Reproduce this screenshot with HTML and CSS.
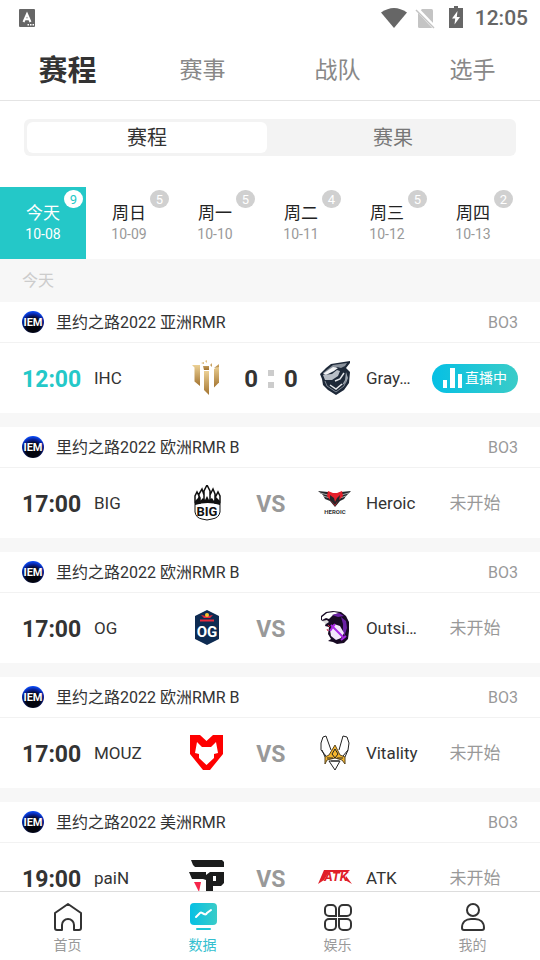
FILE: index.html
```
<!DOCTYPE html>
<html lang="zh-CN">
<head>
  <meta charset="UTF-8" />
  <meta name="viewport" content="width=device-width, initial-scale=1.0" />
  <title>赛程</title>
  <link rel="stylesheet" href="styles.css">
</head>
<body>
  <!-- shared event logo and gradients -->
  <svg class="defs" width="0" height="0" aria-hidden="true">
    <defs>
      <radialGradient id="iem-bg" cx="50%" cy="65%" r="62%">
        <stop offset="0.5" stop-color="#02030c" />
        <stop offset="0.8" stop-color="#08229a" />
        <stop offset="1" stop-color="#0a48f0" />
      </radialGradient>
      <linearGradient id="gold" x1="0" y1="0" x2="0" y2="1">
        <stop offset="0" stop-color="#ecd094" />
        <stop offset="1" stop-color="#a37430" />
      </linearGradient>
      <linearGradient id="teal" x1="0" y1="0" x2="1" y2="0">
        <stop offset="0" stop-color="#06c0e4" />
        <stop offset="1" stop-color="#3accc8" />
      </linearGradient>
      <symbol id="iem" viewBox="0 0 22 22">
        <circle cx="11" cy="11" r="11" fill="url(#iem-bg)" />
        <text x="11" y="15" class="iem-text">IEM</text>
      </symbol>
    </defs>
  </svg>

  <header class="status-bar">
    <svg class="ime" width="16" height="18" viewBox="0 0 16 18">
      <rect width="16" height="18" rx="1" fill="#666" />
      <path d="M4.500 13L8 5l3.500 8M5.700 10.300h4.600" fill="none" stroke="#fff" stroke-width="2" />
      <path d="M8.500 15h1.500v1.500H8.500zM11 15h1.500v1.500H11zM13.500 15H15v1.500h-1.500z" fill="#fff" />
    </svg>
    <div class="status-icons">
      <svg width="26" height="21" viewBox="0 0 26 21"><path d="M0 4.500Q13-4.500 26 4.500L13 20z" fill="#666" /></svg>
      <svg width="20" height="21" viewBox="0 0 20 21">
        <path d="M7 1h9.500a1.500 1.500 0 0 1 1.500 1.500V20H4.500A1.500 1.500 0 0 1 3 18.500V5z" fill="#c4c4c4" />
        <path d="M1 0l19 20" stroke="#fff" stroke-width="4" />
        <path d="M1 2l18 18" stroke="#c4c4c4" stroke-width="1.500" />
      </svg>
      <svg class="battery" width="14" height="22" viewBox="0 0 14 22">
        <path d="M5 0h4v2h5v20H0V2h5z" fill="#666" />
        <path d="M8.500 5L3 12.500h3.200L5.500 18.500 11 11H7.800z" fill="#fff" />
      </svg>
      <span class="clock">12:05</span>
    </div>
  </header>

  <nav class="tabs">
    <a href="#" class="tab active">赛程</a>
    <a href="#" class="tab">赛事</a>
    <a href="#" class="tab">战队</a>
    <a href="#" class="tab">选手</a>
  </nav>

  <div class="segment">
    <button type="button" class="segment-btn active">赛程</button>
    <button type="button" class="segment-btn">赛果</button>
  </div>

  <div class="dates">
    <button type="button" class="date active"><span class="day">今天</span><span class="num">10-08</span><span class="badge">9</span></button>
    <button type="button" class="date"><span class="day">周日</span><span class="num">10-09</span><span class="badge">5</span></button>
    <button type="button" class="date"><span class="day">周一</span><span class="num">10-10</span><span class="badge">5</span></button>
    <button type="button" class="date"><span class="day">周二</span><span class="num">10-11</span><span class="badge">4</span></button>
    <button type="button" class="date"><span class="day">周三</span><span class="num">10-12</span><span class="badge">5</span></button>
    <button type="button" class="date"><span class="day">周四</span><span class="num">10-13</span><span class="badge">2</span></button>
  </div>

  <main class="matches">
    <h2 class="group-title">今天</h2>

    <section class="match">
      <div class="match-head">
        <svg class="event-logo"><use href="#iem" /></svg>
        <span class="event">里约之路2022 亚洲RMR</span>
        <span class="format">BO3</span>
      </div>
      <div class="match-body">
        <span class="time live">12:00</span>
        <span class="team">IHC</span>
        <svg class="logo" viewBox="0 0 36 36">
          <g fill="url(#gold)">
            <path d="M3 5h8v21l-5.500-4.500V7.500z" />
            <path d="M15 11h5v24l-5-5z" />
            <path d="M30 6l-5 3v18.500l5-5z" />
            <path d="M14 6h6v4h-5zM12 3l3-1v2zM16 1l2-1v3zM21 5l2-2v4zM25 8l5-4v3z" />
          </g>
        </svg>
        <span class="score"><b>0</b><i class="dots"></i><b>0</b></span>
        <svg class="logo" viewBox="0 0 36 36">
          <path d="M33 1L14 4 9 8l-6 6 2 5 1 6 5 5 8 5 8-5 5-7 1-11-4-4 4-5z" fill="#1d2838" />
          <path d="M30 3L16 5l-5 4-5 4 2 1 8-4 4-3 4 1 4-2z" fill="#8a929c" />
          <path d="M10 11l6-4 5 1-4 3-8 4-3-1z" fill="#f4f5f7" />
          <path d="M6 15l9-1 5-4 3 1-2 5-6 4H8z" fill="#b9bfc7" />
          <path d="M29 12l2 6-2 5-4 2 3-5z" fill="#9aa2ac" />
          <path d="M8 21l2 5 9 6 8-6 2-5" fill="none" stroke="#7e8792" stroke-width="1" />
          <path d="M13 25l6 4 6-5" fill="none" stroke="#e6e8eb" stroke-width="1.500" />
          <path d="M27 13l-4 6-5 2" fill="none" stroke="#e6e8eb" stroke-width="1.500" />
        </svg>
        <span class="team away">Gray…</span>
        <button type="button" class="live-btn">
          <svg width="20" height="20" viewBox="0 0 20 20"><path d="M0 12h4v8H0zM7 0h5v20H7zM15 6h4v14h-4z" fill="#fff" /></svg>
          <span class="live-label">直播中</span>
        </button>
      </div>
    </section>

    <section class="match">
      <div class="match-head">
        <svg class="event-logo"><use href="#iem" /></svg>
        <span class="event">里约之路2022 欧洲RMR B</span>
        <span class="format">BO3</span>
      </div>
      <div class="match-body">
        <span class="time">17:00</span>
        <span class="team">BIG</span>
        <svg class="logo" viewBox="0 0 36 36">
          <!-- paw -->
          <path d="M6 19q12-5 25 0v8q-1 6-8 7l-5 1-5-1q-6-1-7-7z" fill="#fff" stroke="#111" stroke-width="1" />
          <g fill="#fff" stroke="#111" stroke-width="1.500">
            <path d="M6 18v-7l2-4 3 6v5zM10 17V9l3-5 2 6v6zM15 16V6l3-6 3 6v10zM21 16v-6l3-6 2 5v8zM26 18v-5l3-6 2 4v7z" />
          </g>
          <path d="M6 20v-4l4-4 1 4 3-3 2 2 2-4 2 4 3-2 2 3 2-4 4 4v4q-12-4-25 0z" fill="#111" />
          <text x="18" y="31" class="big-text">BIG</text>
        </svg>
        <span class="vs">VS</span>
        <svg class="logo" viewBox="0 0 36 36">
          <path d="M1 6l10 1 6 3 7-3 10-1-5 5-2 3-4 2-5 6-5-6-5-2-2-4z" fill="#25262a" />
          <path d="M3 8l8 2M6 11l7 2M32 8l-8 2M29 11l-6 2" stroke="#aaa" stroke-width="1" />
          <path d="M11 6l5 2h4l5-2 1 5-5 5-3 5-4-5-4-5z" fill="#e5202b" />
          <path d="M13 10l4 3 1 4 2-4 3-3-1 6-2 1-2 3-3-3-2-2z" fill="#25262a" />
          <text x="18" y="29" class="heroic-text">HEROIC</text>
        </svg>
        <span class="team away">Heroic</span>
        <span class="state">未开始</span>
      </div>
    </section>

    <section class="match">
      <div class="match-head">
        <svg class="event-logo"><use href="#iem" /></svg>
        <span class="event">里约之路2022 欧洲RMR B</span>
        <span class="format">BO3</span>
      </div>
      <div class="match-body">
        <span class="time">17:00</span>
        <span class="team">OG</span>
        <svg class="logo" viewBox="0 0 36 36">
          <path d="M18 0l12 6v23l-12 6-12-6V6z" fill="#0e2b52" />
          <path d="M12 5l5 1 1-3 1 3 5-1-3 3h-6z" fill="#e52b3c" />
          <circle cx="18" cy="5" r="2" fill="#f6c431" />
          <path d="M11 10.500h14" stroke="#e52b3c" stroke-width="2" />
          <text x="18" y="27" class="og-text">OG</text>
        </svg>
        <span class="vs">VS</span>
        <svg class="logo" viewBox="0 0 36 36">
          <path d="M4 6l5-4 7-1 8 1 5 4 3 6v9l-1 8-4 4-7 1-4-2-5-1 3-2-3-5 1-7-4-1 1-3-5-3z" fill="#180a24" />
          <path d="M5 7l5-4 7-1 5 1-6 2-4 4-3-1-4 2z" fill="#fff" />
          <path d="M15 5l7-2 5 3-6 1zM24 7l5 4 1 7-3 9-1-6v-7z" fill="#6b21a5" />
          <path d="M5 11l5-1 2 2-3 2z" fill="#ddd" />
          <path d="M13 20l4-6 6 2 4 7-3 5-5 2-5-4z" fill="#f3e6fb" />
          <path d="M14 15l12 12M18 14l-5 7M24 30l5-4" fill="none" stroke="#a927e6" stroke-width="2" />
          <path d="M11 15l2 2M10 19l1 2" stroke="#d61f3c" stroke-width="1" />
        </svg>
        <span class="team away">Outsi…</span>
        <span class="state">未开始</span>
      </div>
    </section>

    <section class="match">
      <div class="match-head">
        <svg class="event-logo"><use href="#iem" /></svg>
        <span class="event">里约之路2022 欧洲RMR B</span>
        <span class="format">BO3</span>
      </div>
      <div class="match-body">
        <span class="time">17:00</span>
        <span class="team">MOUZ</span>
        <svg class="logo" viewBox="0 0 36 36">
          <path d="M1 0h10l6.500 6L24 0h10v19L21 35h-7L1 19z" fill="#fe0000" />
          <path d="M8 7l5 5h9l5-5 2 11-4 1v4l-7.500 7L10 23v-4l-4-1z" fill="#fff" />
        </svg>
        <span class="vs">VS</span>
        <svg class="logo" viewBox="0 0 36 36">
          <g fill="#fff" stroke="#222" stroke-width="1">
            <path d="M14 15L9 1 6 2 4 8v7l5 6M22 15l4-14 4 1 2 6-1 7-5 6" />
            <path d="M5 15l3 7M31 15l-3 7M12 26l6 9 5-9z" />
          </g>
          <path d="M18 10l5 10 5 2v7l-3-4-7-2-8 2-2 4v-7l4-2z" fill="#f5b62d" stroke="#5b4720" stroke-width="1" />
          <path d="M18 14l3 5-3 4-3-4zM10 23h6M20 23h6M14 26h8" fill="none" stroke="#222" stroke-width="1" />
        </svg>
        <span class="team away">Vitality</span>
        <span class="state">未开始</span>
      </div>
    </section>

    <section class="match">
      <div class="match-head">
        <svg class="event-logo"><use href="#iem" /></svg>
        <span class="event">里约之路2022 美洲RMR</span>
        <span class="format">BO3</span>
      </div>
      <div class="match-body">
        <span class="time">19:00</span>
        <span class="team">paiN</span>
        <svg class="logo" viewBox="0 0 36 36">
          <path d="M2 0h31l2 2v5H6L4 5zM0 12h17v3l4-3h14v11l-3 3h-8v9h-7V20l-3-1H3z" fill="#1b1c1c" />
          <path d="M24 16h3v5h-3z" fill="#fff" />
          <path d="M5 22h7l-2 10z" fill="#f5254a" />
        </svg>
        <span class="vs">VS</span>
        <svg class="logo" viewBox="0 0 36 36">
          <path d="M7 10h26l-2 2H12l-5 8-6 4zM29 16l6 8-7-4z" fill="#e01f29" />
          <text x="19" y="21" class="atk-text">ATK</text>
        </svg>
        <span class="team away">ATK</span>
        <span class="state">未开始</span>
      </div>
    </section>
  </main>

  <nav class="bottom-nav">
    <a href="#" class="nav-item">
      <svg width="30" height="30" viewBox="0 0 30 30" fill="none" stroke="#333" stroke-width="2" stroke-linejoin="round">
        <path d="M2 11L15 2l13 9v15a2 2 0 0 1-2 2h-5v-5a6 6 0 0 0-12 0v5H4a2 2 0 0 1-2-2z" />
      </svg>首页
    </a>
    <a href="#" class="nav-item active">
      <svg width="30" height="30" viewBox="0 0 30 30">
        <rect x="2" y="1" width="27" height="22" rx="4" fill="url(#teal)" />
        <rect x="8" y="26" width="15" height="2" rx="1" fill="#20c6d6" />
        <path d="M8 15l4-4q1-1 2 0l2 1q2 1 3-1l4-3" fill="none" stroke="#fff" stroke-width="2" stroke-linecap="round" />
      </svg>数据
    </a>
    <a href="#" class="nav-item">
      <svg width="30" height="30" viewBox="0 0 30 30" fill="none" stroke="#333" stroke-width="2">
        <path d="M6 3h3a4 4 0 0 1 4 4v7H6a4 4 0 0 1-4-4V7a4 4 0 0 1 4-4zM16 14V7a4 4 0 0 1 4-4h4a4 4 0 0 1 4 4v3a4 4 0 0 1-4 4zM6 17h7v7a4 4 0 0 1-4 4H6a4 4 0 0 1-4-4v-3a4 4 0 0 1 4-4zM16 17h8a4 4 0 0 1 4 4v3a4 4 0 0 1-4 4h-4a4 4 0 0 1-4-4z" />
      </svg>娱乐
    </a>
    <a href="#" class="nav-item">
      <svg width="30" height="30" viewBox="0 0 30 30" fill="none" stroke="#333" stroke-width="2">
        <circle cx="15" cy="8" r="6" />
        <path d="M4 26c0-6 4-9 9-9h4c5 0 9 3 9 9q0 2-2 2H6q-2 0-2-2z" />
      </svg>我的
    </a>
  </nav>
</body>
</html>
```
FILE: styles.css
```
* {
  box-sizing: border-box;
}
body {
  margin: 0;
  height: 100vh;
  display: flex;
  flex-direction: column;
  overflow: hidden;
  background: #fff;
  color: #333;
  font-family: Roboto, "Noto Sans CJK SC", sans-serif;
}
a {
  color: inherit;
  text-decoration: none;
}
button {
  border: 0;
  padding: 0;
  background: none;
  color: inherit;
  font-family: inherit;
  cursor: pointer;
}
svg {
  display: block;
  flex: none;
}
.defs {
  position: absolute;
}

/* status bar */
.status-bar {
  flex: none;
  display: flex;
  align-items: center;
  justify-content: space-between;
  height: 36px;
  padding: 0 12px 0 19px;
}
.status-icons {
  display: flex;
  align-items: center;
  gap: 8px;
}
.battery {
  margin: 0 4px 2px 6px;
}
.clock {
  color: #666;
  font-size: 21px;
  font-weight: 500;
  line-height: 38px;
}

/* top tabs */
.tabs {
  flex: none;
  display: flex;
  height: 65px;
  border-bottom: 1px solid #e4e4e4;
}
.tab {
  flex: 1;
  text-align: center;
  color: #888;
  font-size: 23px;
  line-height: 70px;
}
.tab.active {
  color: #333;
  font-size: 29px;
  font-weight: bold;
}

.segment {
  flex: none;
  display: grid;
  grid-template-columns: 1fr 1fr;
  margin: 18px 24px 31px;
  border-radius: 6px;
  background: #f3f3f3;
}
.segment-btn {
  height: 31px;
  margin: 3px;
  border-radius: 6px;
  color: #777;
  font-size: 20px;
  line-height: 30px;
}
.segment-btn.active {
  background: #fff;
  color: #333;
}

/* date strip */
.dates {
  flex: none;
  display: flex;
  overflow: hidden;
}
.date {
  position: relative;
  flex: none;
  display: flex;
  flex-direction: column;
  align-items: center;
  width: 86px;
  height: 72px;
  padding-top: 14px;
  color: #999;
}
.day {
  color: #222;
  font-size: 17px;
  line-height: 24px;
}
.num {
  font-size: 14px;
  line-height: 18px;
}
.badge {
  position: absolute;
  top: 3px;
  right: 3px;
  width: 19px;
  height: 18px;
  border-radius: 9px;
  background: #d0d0d0;
  color: #fff;
  font-size: 13px;
  line-height: 19px;
}
.date.active {
  background: #24c8c8;
  color: #fff;
}
.date.active .day {
  color: #fff;
}
.date.active .badge {
  background: #fff;
  color: #24c8c8;
}

/* match list */
.matches {
  flex: 1;
  min-height: 0;
  overflow: hidden;
  background: #f7f7f7;
}
.group-title {
  margin: 0;
  padding: 0 22px;
  color: #ccc;
  font-size: 16px;
  font-weight: normal;
  line-height: 43px;
}
.match {
  margin-bottom: 14px;
  background: #fff;
}
.match-head {
  display: flex;
  align-items: center;
  gap: 12px;
  height: 41px;
  padding: 0 22px;
  border-bottom: 1px solid #f2f2f2;
  font-size: 16px;
  line-height: 41px;
}
.event-logo {
  width: 22px;
  height: 22px;
}
.event {
  flex: 1;
}
.format {
  color: #999;
}
.match-body {
  display: grid;
  grid-template-columns: 72px 6fr 36px 92px 36px 5fr 86px;
  align-items: center;
  height: 70px;
  padding: 0 22px;
  line-height: 24px;
}
.time,
.vs {
  padding-top: 4px;
  font-size: 23px;
  font-weight: bold;
  line-height: 30px;
}
.time.live {
  color: #24c8c8;
}
.team {
  min-width: 0;
  overflow: hidden;
  white-space: nowrap;
  text-overflow: ellipsis;
  font-size: 17px;
}
.team.away {
  margin: 0 8px 0 13px;
}
.logo {
  width: 36px;
  height: 36px;
}
.score {
  display: flex;
  align-items: center;
  justify-content: center;
  gap: 10px;
  padding-top: 2px;
  font-size: 24px;
  line-height: 30px;
}
.dots {
  width: 6px;
  height: 18px;
  border: solid #ccc;
  border-width: 6px 0;
}
.vs {
  text-align: center;
  color: #999;
}
.state {
  text-align: center;
  color: #999;
  font-size: 17px;
}
.live-btn {
  display: flex;
  align-items: center;
  justify-content: center;
  gap: 2px;
  height: 29px;
  border-radius: 15px;
  background: linear-gradient(90deg, #06c0e4, #3accc8);
  color: #fff;
  font-size: 14px;
}
.live-label {
  line-height: 20px;
}

/* lettering inside the logos */
.iem-text,
.big-text,
.og-text,
.heroic-text,
.atk-text {
  text-anchor: middle;
  font-family: Roboto, sans-serif;
  font-weight: bold;
}
.iem-text {
  fill: #fff;
  font-size: 11px;
}
.big-text {
  fill: #111;
  font-size: 13px;
}
.og-text {
  fill: #fff;
  font-size: 15px;
}
.heroic-text {
  fill: #333;
  font-size: 6px;
}
.atk-text {
  fill: #e01f29;
  font-size: 13px;
  font-style: italic;
}

/* bottom navigation */
.bottom-nav {
  flex: none;
  display: flex;
  height: 69px;
  border-top: 1px solid #ddd;
  background: #fff;
}
.nav-item {
  flex: 1;
  display: flex;
  flex-direction: column;
  align-items: center;
  padding-top: 10px;
  color: #999;
  font-size: 14px;
  line-height: 26px;
}
.nav-item.active {
  color: #35bfcf;
}
```
